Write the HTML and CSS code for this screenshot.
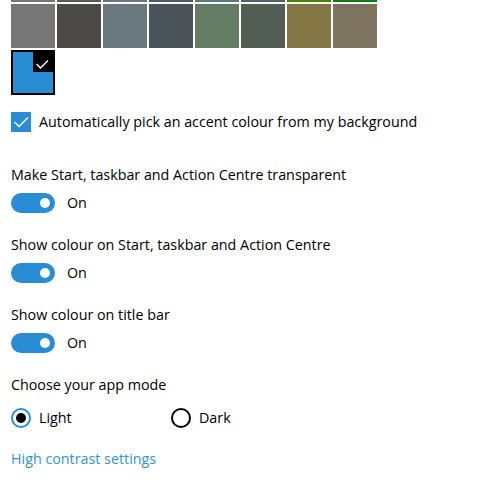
FILE: index.html
```html
<!DOCTYPE html>
<html lang="en">

<head>
    <meta charset="UTF-8">
    <meta name="viewport" content="width=device-width, initial-scale=1.0">
    <title>Colours</title>
    <link rel="stylesheet" href="styles.css">
</head>

<body>
    <div class="page">
        <div class="swatches strip">
            <span class="swatch" style="background: #7a7574"></span>
            <span class="swatch" style="background: #5d5a58"></span>
            <span class="swatch" style="background: #68768a"></span>
            <span class="swatch" style="background: #515c6b"></span>
            <span class="swatch" style="background: #567c73"></span>
            <span class="swatch" style="background: #486860"></span>
            <span class="swatch" style="background: #498205"></span>
            <span class="swatch" style="background: #107c10"></span>
        </div>

        <div class="swatches">
            <span class="swatch" style="background: #767676"></span>
            <span class="swatch" style="background: #4c4a48"></span>
            <span class="swatch" style="background: #69797e"></span>
            <span class="swatch" style="background: #4a5459"></span>
            <span class="swatch" style="background: #647c64"></span>
            <span class="swatch" style="background: #525e54"></span>
            <span class="swatch" style="background: #847545"></span>
            <span class="swatch" style="background: #7e735f"></span>
        </div>

        <div class="swatches">
            <span class="swatch selected">
                <span class="tick">
                    <svg width="20" height="20" viewBox="0 0 20 20">
                        <path d="M3.5 12 L7.5 16 L15 8.5" fill="none" stroke="#fff" stroke-width="1.3" />
                    </svg>
                </span>
            </span>
        </div>

        <label class="check-row">
            <span class="checkbox">
                <svg width="20" height="20" viewBox="0 0 20 20">
                    <path d="M3.5 10 L8 14.5 L17 5.5" fill="none" stroke="#fff" stroke-width="1.4" />
                </svg>
            </span>
            Automatically pick an accent colour from my background
        </label>

        <div class="setting">
            <div class="label">Make Start, taskbar and Action Centre transparent</div>
            <div class="toggle-row"><span class="toggle"></span>On</div>
        </div>

        <div class="setting">
            <div class="label">Show colour on Start, taskbar and Action Centre</div>
            <div class="toggle-row"><span class="toggle"></span>On</div>
        </div>

        <div class="setting">
            <div class="label">Show colour on title bar</div>
            <div class="toggle-row"><span class="toggle"></span>On</div>
        </div>

        <div class="setting">
            <div class="label">Choose your app mode</div>
            <div class="radio-row">
                <label class="radio-option"><span class="radio checked"></span>Light</label>
                <label class="radio-option"><span class="radio"></span>Dark</label>
            </div>
        </div>

        <a href="#" class="link">High contrast settings</a>
    </div>
</body>

</html>
```

FILE: styles.css
```css
body {
    font-family: "Open Sans", "Noto Sans", sans-serif;
    font-size: 14.3px;
    color: #000;
    background-color: #fff;
    margin: 0;
    padding: 0;
}

.page {
    padding-left: 11px;
}

.swatches {
    display: flex;
    gap: 2px;
    margin-bottom: 2px;
}

.swatch {
    display: block;
    width: 44px;
    height: 44px;
}

.strip .swatch {
    height: 2px;
}

.swatch.selected {
    box-sizing: border-box;
    position: relative;
    height: 45px;
    border: 2px solid #000;
    background-color: #298dd5;
}

.tick {
    position: absolute;
    top: 0;
    right: 0;
    width: 20px;
    height: 20px;
    background-color: #000;
}

.tick svg,
.checkbox svg {
    display: block;
}

.check-row {
    display: flex;
    align-items: center;
    gap: 8px;
    margin-top: 17px;
    height: 20px;
    line-height: 22px;
}

.checkbox {
    width: 20px;
    height: 20px;
    background-color: #298dd5;
}

.setting {
    margin-top: 32px;
}

.setting + .setting {
    margin-top: 21px;
}

.label {
    height: 20px;
    line-height: 22px;
}

.toggle-row {
    display: flex;
    align-items: center;
    gap: 12px;
    margin-top: 9px;
    height: 20px;
    line-height: 22px;
}

.toggle {
    position: relative;
    width: 44px;
    height: 20px;
    border-radius: 10px;
    background-color: #298dd5;
}

.toggle::after {
    content: "";
    position: absolute;
    top: 5px;
    right: 5px;
    width: 10px;
    height: 10px;
    border-radius: 50%;
    background-color: #fff;
}

.radio-row {
    display: flex;
    margin-top: 14px;
    height: 20px;
    line-height: 22px;
}

.radio-option {
    display: flex;
    align-items: center;
    gap: 8px;
    width: 160px;
}

.radio {
    box-sizing: border-box;
    position: relative;
    width: 20px;
    height: 20px;
    border: 2px solid #000;
    border-radius: 50%;
}

.radio.checked {
    border-color: #298dd5;
}

.radio.checked::after {
    content: "";
    position: absolute;
    top: 3px;
    left: 3px;
    width: 10px;
    height: 10px;
    border-radius: 50%;
    background-color: #000;
}

.link {
    display: inline-block;
    margin-top: 20px;
    height: 20px;
    line-height: 22px;
    color: #3393d8;
    text-decoration: none;
}
```
